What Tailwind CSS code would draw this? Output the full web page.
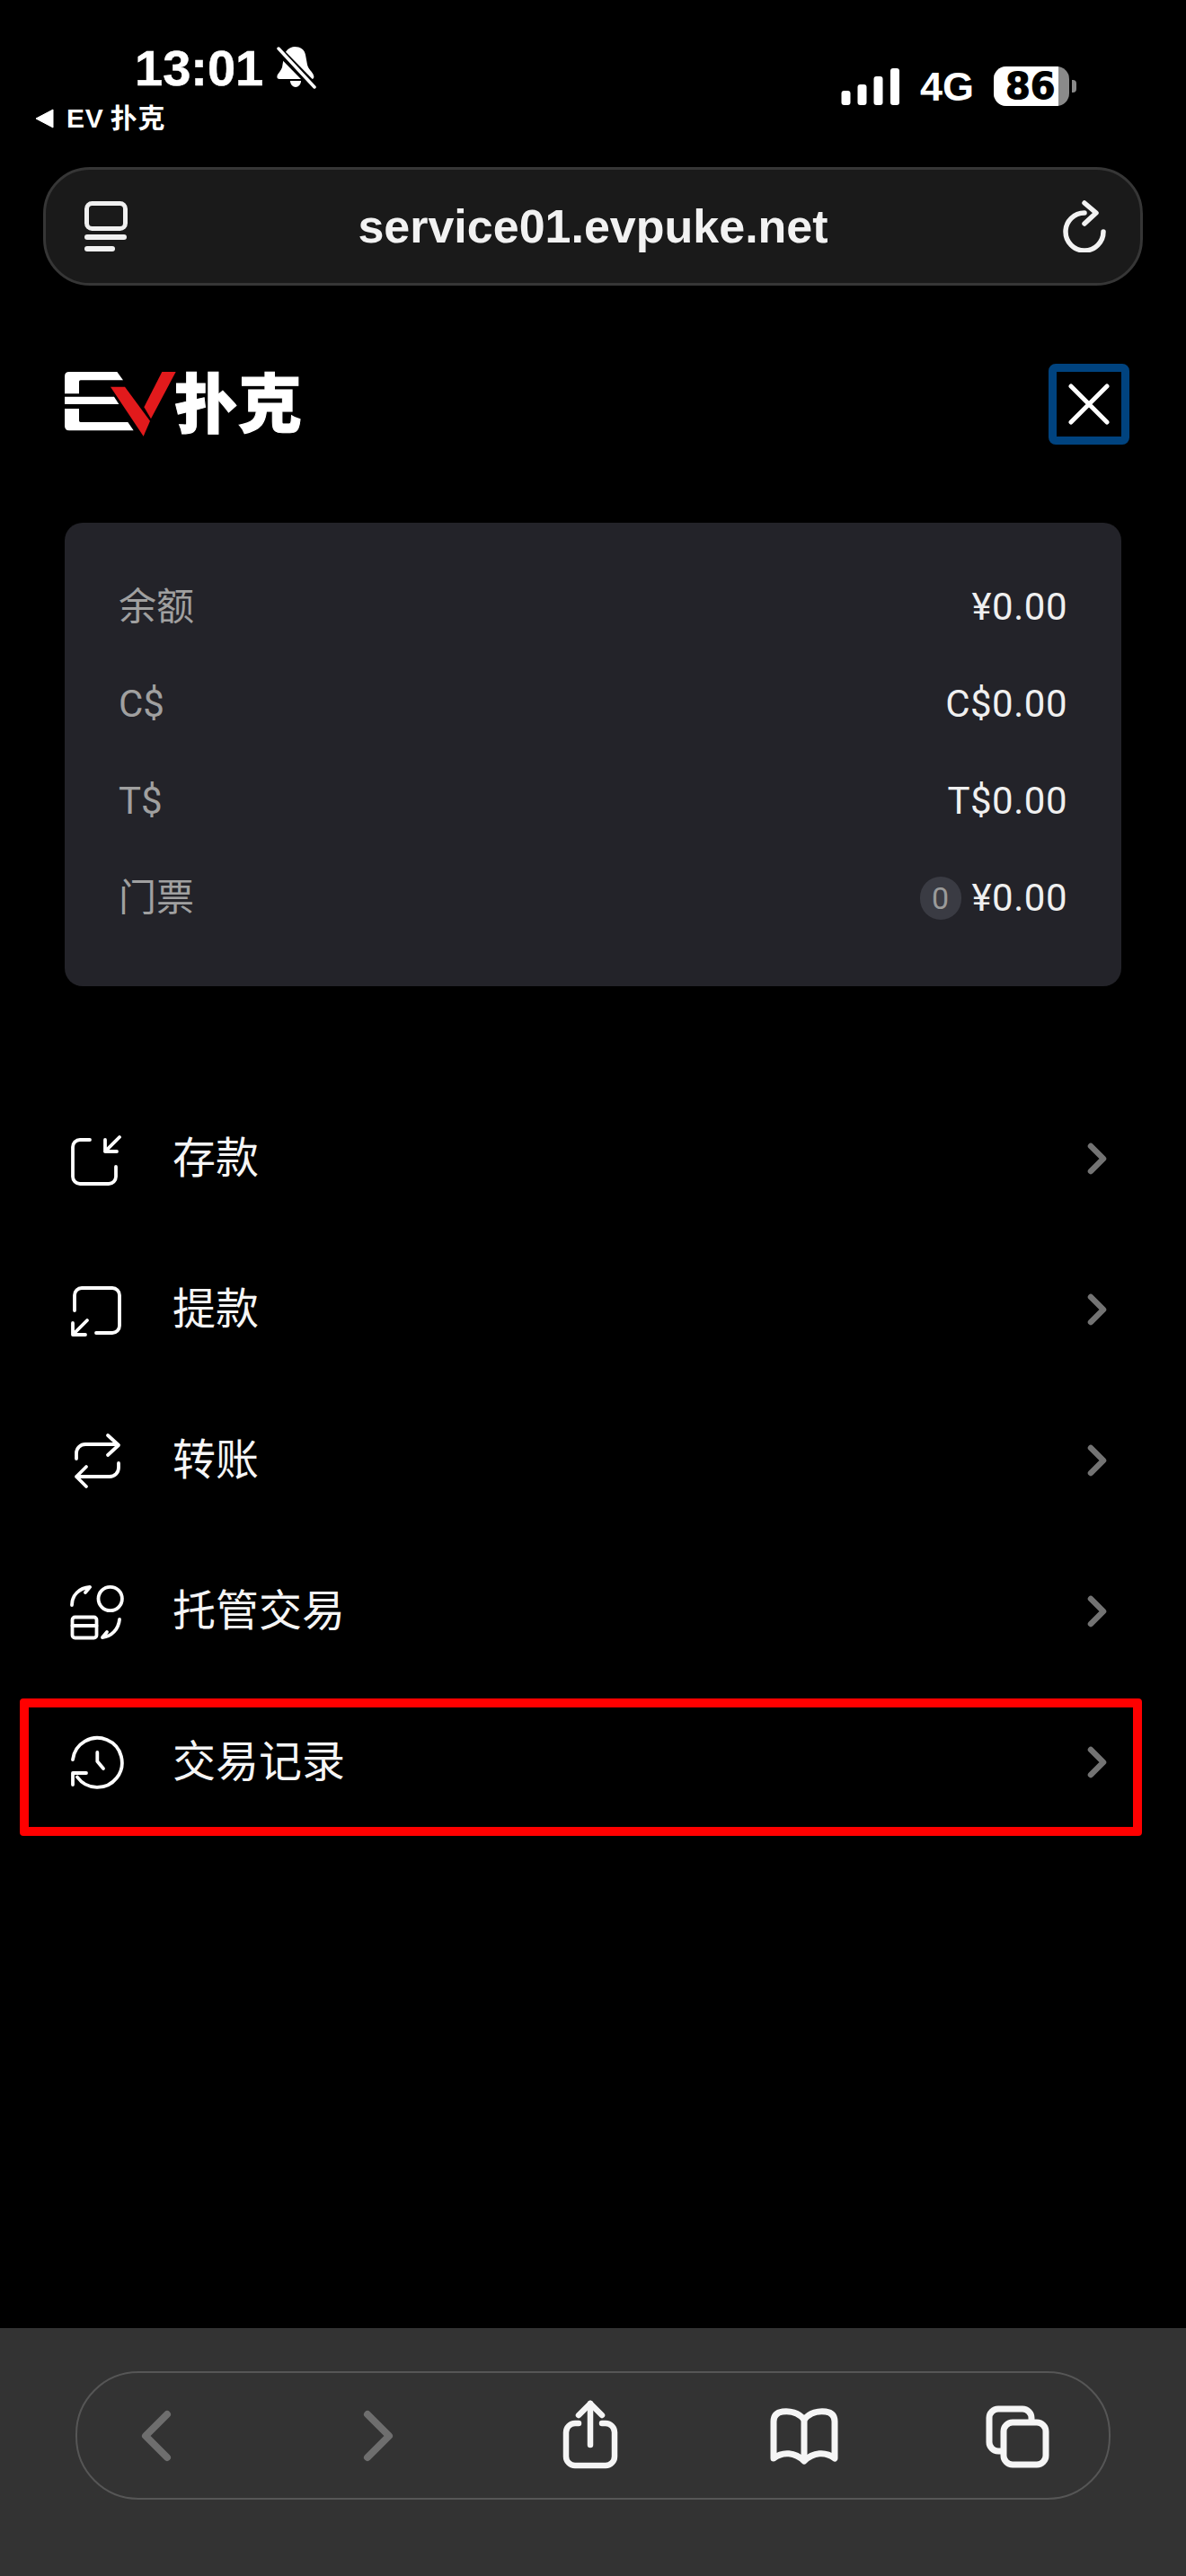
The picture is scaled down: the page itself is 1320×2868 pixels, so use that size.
<!doctype html>
<html lang="zh-CN">
<head>
<meta charset="utf-8">
<title>EV 扑克</title>
<script src="https://cdn.jsdelivr.net/npm/@tailwindcss/browser@4"></script>
</head>
<body class="bg-black">
<div class="w-[1320px] h-[2868px] bg-black flex flex-col font-['Roboto','Noto_Sans_CJK_SC',sans-serif] text-white overflow-hidden">

  <!-- status bar -->
  <div class="h-[186px] shrink-0 flex justify-between">
    <div class="pl-[39px] pt-[44px] flex flex-col">
      <div class="pl-[111px] flex items-center h-[64px]">
        <span class="font-['Liberation_Sans'] font-bold text-[56px] leading-none [-webkit-text-stroke:0.5px_white]">13:01</span>
        <svg class="ml-[15px] -mt-[2px]" width="44" height="48" viewBox="0 0 44 48" fill="white">
          <path d="M20 1c6 0 11 3 12 9l2 11c1 5 6 8 7 12 1 2 0 4-2 4H3c-3 0-3-3-2-5 2-3 4-5 5-8L8 12C9 6 14 1 20 1z"/>
          <path d="M15 39h12c0 4-3 7-6 7s-6-3-6-7z"/>
          <path d="M0 3 43 47" stroke="black" stroke-width="9"/>
          <path d="M2 3 42 46" stroke="white" stroke-width="3.5" stroke-linecap="round"/>
        </svg>
      </div>
      <div class="flex items-center h-[30px] mt-[9px]">
        <svg width="21" height="22" viewBox="0 0 21 22" fill="white"><path d="M20 1v20L1 11z" stroke="white" stroke-linejoin="round"/></svg>
        <span class="ml-[14px] font-['Liberation_Sans','Noto_Sans_CJK_SC',sans-serif] font-bold text-[30px] leading-none tracking-[0.8px] [word-spacing:-2px]">EV 扑克</span>
      </div>
    </div>
    <div class="pr-[122px] pt-[74px] flex items-start">
      <svg class="mt-[2px]" width="66" height="42" viewBox="0 0 66 42" fill="white">
        <rect x="0.5" y="25" width="10" height="16" rx="3"/>
        <rect x="18.5" y="18" width="10" height="23" rx="3"/>
        <rect x="36.5" y="9" width="10" height="32" rx="3"/>
        <rect x="55" y="0" width="10" height="41" rx="3"/>
      </svg>
      <span class="ml-[22px] mt-[3px] font-['Liberation_Sans'] font-bold text-[45px] leading-[40px]">4G</span>
      <div class="ml-[22px] relative w-[84px] h-[44px] rounded-[14px] overflow-hidden bg-[#8a8a8a] flex">
        <div class="w-[72px] h-full bg-white"></div>
        <span class="absolute left-[13px] top-0 h-full flex items-center font-['DejaVu_Sans'] font-bold text-[40px] leading-none text-black [-webkit-text-stroke:1px_black]">86</span>
      </div>
      <div class="ml-[3px] mt-[15px] w-[5px] h-[14px] rounded-r-[4px] bg-[#8a8a8a]"></div>
    </div>
  </div>

  <!-- address bar -->
  <div class="ml-[48px] w-[1224px] h-[132px] shrink-0 rounded-[52px] bg-[#1a1a1a] border-[3px] border-[#363636] flex items-center pl-[43px] pr-[38px]">
    <svg width="48" height="56" viewBox="0 0 48 56" fill="none" stroke="#f0f0f0" stroke-linecap="round">
      <rect x="2.5" y="2.5" width="43" height="28" rx="6" stroke-width="5"/>
      <path d="M3 40h41" stroke-width="6"/>
      <path d="M3 53h28" stroke-width="6"/>
    </svg>
    <span class="flex-1 pr-[5px] text-center font-['Liberation_Sans'] font-bold text-[52px] leading-none text-[#f2f2f2]">service01.evpuke.net</span>
    <svg width="48" height="58" viewBox="0 0 48 58" fill="none" stroke="#f2f2f2" stroke-width="5.5" stroke-linecap="round" stroke-linejoin="round">
      <path d="M24 14A21 21 0 1 0 45 35"/>
      <path d="M24 3 37 14 24 26"/>
    </svg>
  </div>

  <!-- brand row -->
  <div class="mt-[87px] h-[90px] shrink-0 pl-[72px] pr-[63px] flex items-center justify-between">
    <div class="flex items-center">
      <svg width="124" height="72" viewBox="97 72 372 216">
        <path fill="#fff" d="M112 72H272L292 100H150q-5 0-5 5V145H97V87q0-15 15-15z"/>
        <path fill="#fff" d="M97 155H262L278 180H97z"/>
        <path fill="#fff" d="M97 195H145V235q0 5 5 5H308L327 268H112q-15 0-15-15z"/>
        <path fill="#e21a1c" d="M250 122H298L382 236 360 287z"/>
        <path fill="#e21a1c" d="M422 72H468L385 229 362 190z"/>
      </svg>
      <span class="-ml-[2px] -mt-[11px] font-['Noto_Sans_CJK_SC',sans-serif] font-black text-[71px] leading-none [-webkit-text-stroke:1px_white]">扑克</span>
    </div>
    <div class="w-[90px] h-[90px] rounded-[8px] border-[9px] border-[#00437f] flex items-center justify-center">
      <svg width="46" height="46" viewBox="0 0 46 46" fill="none" stroke="white" stroke-width="5" stroke-linecap="round"><path d="M3 3 43 43M43 3 3 43"/></svg>
    </div>
  </div>

  <!-- balances -->
  <div class="mt-[87px] ml-[72px] w-[1176px] h-[516px] shrink-0 rounded-[20px] bg-[#232329] pt-[40px] pl-[60px] pr-[60px] text-[42px] leading-none">
    <div class="h-[108px] flex items-center justify-between"><span class="text-[#a0a0a0]">余额</span><span class="text-[#f0f0f0] tracking-[0.5px]">¥0.00</span></div>
    <div class="h-[108px] flex items-center justify-between"><span class="text-[#a0a0a0]">C$</span><span class="text-[#f0f0f0] tracking-[0.5px]">C$0.00</span></div>
    <div class="h-[108px] flex items-center justify-between"><span class="text-[#a0a0a0]">T$</span><span class="text-[#f0f0f0] tracking-[0.5px]">T$0.00</span></div>
    <div class="h-[108px] flex items-center justify-between">
      <span class="text-[#a0a0a0]">门票</span>
      <span class="flex items-center">
        <span class="w-[46px] h-[48px] rounded-full bg-[#3a3b43] flex items-center justify-center text-[34px] text-[#9a9a9a]">0</span>
        <span class="ml-[12px] text-[#f0f0f0] tracking-[0.5px]">¥0.00</span>
      </span>
    </div>
  </div>

  <!-- menu -->
  <div class="mt-[108px] shrink-0 text-[48px] leading-none text-[#f5f5f5]">
    <div class="h-[168px] flex items-center pl-[76px] pr-[88px]">
      <svg width="64" height="64" viewBox="0 0 64 64" fill="none" stroke="white" stroke-width="3.8" stroke-linecap="round" stroke-linejoin="round">
        <path d="M24 11H13a8 8 0 0 0-8 8V52a8 8 0 0 0 8 8H45a8 8 0 0 0 8-8V41"/>
        <path d="M57 8 41 24M41 11V24H54"/>
      </svg>
      <span class="ml-[52px]">存款</span>
      <svg class="ml-auto" width="24" height="36" viewBox="0 0 24 36" fill="none" stroke="#737373" stroke-width="6.5" stroke-linecap="round" stroke-linejoin="round"><path d="M6 4 20 18 6 32"/></svg>
    </div>
    <div class="h-[168px] flex items-center pl-[76px] pr-[88px]">
      <svg width="64" height="64" viewBox="0 0 64 64" fill="none" stroke="white" stroke-width="3.8" stroke-linecap="round" stroke-linejoin="round">
        <path d="M7 33V16a8 8 0 0 1 8-8H49a8 8 0 0 1 8 8V50a8 8 0 0 1-8 8H31"/>
        <path d="M21 44 5 60M5 47V60H19"/>
      </svg>
      <span class="ml-[52px]">提款</span>
      <svg class="ml-auto" width="24" height="36" viewBox="0 0 24 36" fill="none" stroke="#737373" stroke-width="6.5" stroke-linecap="round" stroke-linejoin="round"><path d="M6 4 20 18 6 32"/></svg>
    </div>
    <div class="h-[168px] flex items-center pl-[76px] pr-[88px]">
      <svg width="64" height="64" viewBox="0 0 64 64" fill="none" stroke="white" stroke-width="3.8" stroke-linecap="round" stroke-linejoin="round">
        <path d="M9 30V24A10 10 0 0 1 19 14H55M44 4 56 15 44 26"/>
        <path d="M56 35V40A10 10 0 0 1 46 50H9M20 39 9 50 20 61"/>
      </svg>
      <span class="ml-[52px]">转账</span>
      <svg class="ml-auto" width="24" height="36" viewBox="0 0 24 36" fill="none" stroke="#737373" stroke-width="6.5" stroke-linecap="round" stroke-linejoin="round"><path d="M6 4 20 18 6 32"/></svg>
    </div>
    <div class="h-[168px] flex items-center pl-[76px] pr-[88px]">
      <svg width="64" height="64" viewBox="0 0 64 64" fill="none" stroke="white" stroke-width="3.8" stroke-linecap="round" stroke-linejoin="round">
        <circle cx="46.7" cy="18" r="13.2"/>
        <rect x="4.5" y="38.5" width="27" height="23" rx="3"/>
        <path d="M4.5 48H31.5"/>
        <path d="M4 25C4 14 12 6 24 5M24 5 19 11"/>
        <path d="M57 41C56 52 48 60 38 61M38 61 43 55"/>
      </svg>
      <span class="ml-[52px]">托管交易</span>
      <svg class="ml-auto" width="24" height="36" viewBox="0 0 24 36" fill="none" stroke="#737373" stroke-width="6.5" stroke-linecap="round" stroke-linejoin="round"><path d="M6 4 20 18 6 32"/></svg>
    </div>
    <div class="relative h-[168px] flex items-center pl-[76px] pr-[88px]">
      <div class="absolute left-[22px] top-[13px] w-[1249px] h-[153px] rounded-[4px] border-[10px] border-[#ff0000]"></div>
      <svg width="64" height="64" viewBox="0 0 64 64" fill="none" stroke="white" stroke-width="3.8" stroke-linecap="round" stroke-linejoin="round">
        <path d="M5 29A27.5 27.5 0 1 1 10 48.5"/>
        <path d="M5 57V44H20"/>
        <path d="M32.3 21V31L39 39"/>
      </svg>
      <span class="ml-[52px]">交易记录</span>
      <svg class="ml-auto" width="24" height="36" viewBox="0 0 24 36" fill="none" stroke="#737373" stroke-width="6.5" stroke-linecap="round" stroke-linejoin="round"><path d="M6 4 20 18 6 32"/></svg>
    </div>
  </div>

  <!-- browser toolbar -->
  <div class="mt-auto h-[276px] shrink-0 bg-[#333333] pt-[48px] pl-[84px]">
    <div class="w-[1152px] h-[143px] rounded-[70px] border-[2px] border-[#565656] flex items-center">
      <svg class="ml-[68px]" width="40" height="62" viewBox="0 0 40 62" fill="none" stroke="#6e6e6e" stroke-width="8" stroke-linecap="round" stroke-linejoin="round"><path d="M32 7 8 31 32 55"/></svg>
      <svg class="ml-[209px]" width="40" height="62" viewBox="0 0 40 62" fill="none" stroke="#6e6e6e" stroke-width="8" stroke-linecap="round" stroke-linejoin="round"><path d="M6 7 30 31 6 55"/></svg>
      <svg class="ml-[181px]" width="66" height="80" viewBox="0 0 66 80" fill="none" stroke="#f5f5f5" stroke-width="6.5" stroke-linecap="round" stroke-linejoin="round">
        <path d="M20 26H16A10 10 0 0 0 6 36V63A10 10 0 0 0 16 73H50A10 10 0 0 0 60 63V36A10 10 0 0 0 50 26H46"/>
        <path d="M33 4V50"/>
        <path d="M20 17 33 4 46 17"/>
      </svg>
      <svg class="ml-[165px] mt-[2px]" width="80" height="66" viewBox="0 0 80 66" fill="none" stroke="#f5f5f5" stroke-width="7" stroke-linejoin="round" stroke-linecap="round">
        <path d="M40 14C34 6 24 4 16 5 9 6 6 10 6 16V57C16 49 30 50 40 60 50 50 64 49 74 57V16C74 10 71 6 64 5 56 4 46 6 40 14Z"/>
        <path d="M40 14V58"/>
      </svg>
      <svg class="ml-[160px] mt-[8px]" width="76" height="76" viewBox="0 0 76 76" fill="none" stroke="#f5f5f5" stroke-width="7">
        <rect x="6" y="4" width="47" height="47" rx="10"/>
        <rect x="22" y="19" width="47" height="47" rx="10" fill="#333333"/>
      </svg>
    </div>
  </div>
</div>
</body>
</html>
